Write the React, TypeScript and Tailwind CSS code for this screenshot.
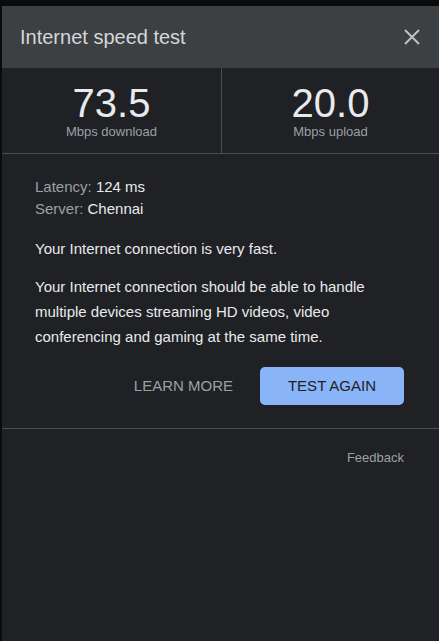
import React from 'react';

const CloseIcon: React.FC = () => (
  <svg width="16" height="16" viewBox="0 0 16 16" className="text-[#bdc1c6]">
    <path d="M1 1L15 15M15 1L1 15" stroke="currentColor" strokeWidth="2" />
  </svg>
);

const Stat: React.FC<{ value: string; label: string; className?: string }> = ({
  value,
  label,
  className,
}) => (
  <div className={`flex flex-col items-center pt-[14px] ${className ?? ''}`}>
    <div className="text-[40px] leading-[42px] text-[#e8eaed]">{value}</div>
    <div className="text-[13px] leading-[16px] text-[#9aa0a6]">{label}</div>
  </div>
);

const App: React.FC = () => {
  return (
    <div
      className="w-[439px] h-[641px] bg-[#0a0b0b] pt-[6px] pl-[2px] overflow-hidden"
      style={{ fontFamily: '"Liberation Sans", Arial, sans-serif' }}
    >
      <div className="h-full bg-[#202124] flex flex-col">
        <div className="h-[62px] bg-[#3c4043] flex items-center justify-between pl-[18px] pr-[19px]">
          <span className="text-[20px] text-[#d4d6d9]">Internet speed test</span>
          <CloseIcon />
        </div>

        <div className="flex h-[86px] border-b border-[#4a4d51]">
          <Stat value="73.5" label="Mbps download" className="w-[220px] border-r border-[#4a4d51]" />
          <Stat value="20.0" label="Mbps upload" className="flex-1" />
        </div>

        <div className="pt-[22px] pb-[23px] pl-[33px] pr-[35px] text-[15px] border-b border-[#4a4d51]">
          <div className="leading-[22px]">
            <div>
              <span className="text-[#9aa0a6]">Latency: </span>
              <span className="text-[#e8eaed]">124 ms</span>
            </div>
            <div>
              <span className="text-[#9aa0a6]">Server: </span>
              <span className="text-[#e8eaed]">Chennai</span>
            </div>
          </div>
          <p className="mt-[16px] leading-[25px] text-[#e8eaed]">
            Your Internet connection is very fast.
          </p>
          <p className="mt-[13px] leading-[25px] text-[#e8eaed]">
            Your Internet connection should be able to handle multiple devices streaming HD
            videos, video conferencing and gaming at the same time.
          </p>
          <div className="mt-[18px] flex justify-end items-center gap-[27px]">
            <button className="text-[15px] text-[#9aa0a6]">LEARN MORE</button>
            <button className="w-[144px] h-[38px] rounded-[5px] bg-[#8ab4f8] text-[15px] text-[#202124]">
              TEST AGAIN
            </button>
          </div>
        </div>

        <div className="flex justify-end pt-[21px] pr-[35px]">
          <span className="text-[13px] leading-[16px] text-[#9aa0a6]">Feedback</span>
        </div>
      </div>
    </div>
  );
};

export default App;
